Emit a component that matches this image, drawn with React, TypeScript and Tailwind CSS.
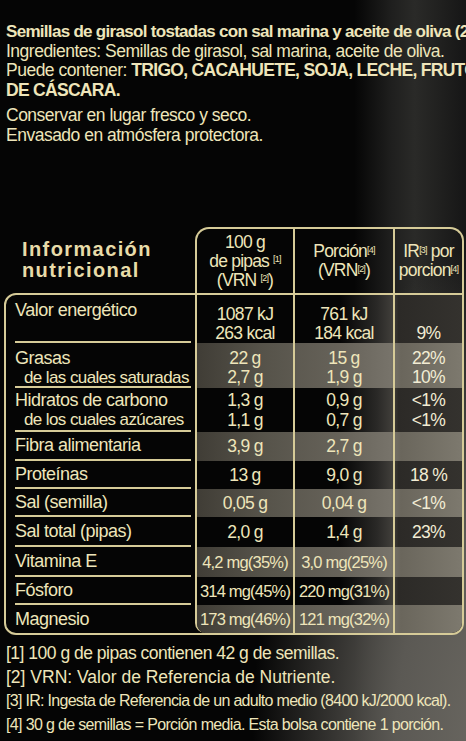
import React from "react";

type Row = {
  labels: { text: string; sub?: boolean }[];
  c1: string[];
  c2: string[];
  c3: string[];
  h: string;
  box: string;
  shade: boolean;
  mg?: boolean;
};

const rows: Row[] = [
  {
    labels: [{ text: "Valor energético" }],
    c1: ["1087 kJ", "263 kcal"],
    c2: ["761 kJ", "184 kcal"],
    c3: ["", "9%"],
    h: "h-[48px]",
    box: "pt-[10px] leading-[19px]",
    shade: false,
  },
  {
    labels: [{ text: "Grasas" }, { text: "de las cuales saturadas", sub: true }],
    c1: ["22 g", "2,7 g"],
    c2: ["15 g", "1,9 g"],
    c3: ["22%", "10%"],
    h: "h-[45px]",
    box: "pt-[6px] leading-[19px]",
    shade: true,
  },
  {
    labels: [{ text: "Hidratos de carbono" }, { text: "de los cuales azúcares", sub: true }],
    c1: ["1,3 g", "1,1 g"],
    c2: ["0,9 g", "0,7 g"],
    c3: ["<1%", "<1%"],
    h: "h-[44px]",
    box: "pt-[2px] leading-[20px]",
    shade: false,
  },
  { labels: [{ text: "Fibra alimentaria" }], c1: ["3,9 g"], c2: ["2,7 g"], c3: [""], h: "h-[29px]", box: "", shade: true },
  { labels: [{ text: "Proteínas" }], c1: ["13 g"], c2: ["9,0 g"], c3: ["18 %"], h: "h-[28px]", box: "", shade: false },
  { labels: [{ text: "Sal (semilla)" }], c1: ["0,05 g"], c2: ["0,04 g"], c3: ["<1%"], h: "h-[28px]", box: "", shade: true },
  { labels: [{ text: "Sal total (pipas)" }], c1: ["2,0 g"], c2: ["1,4 g"], c3: ["23%"], h: "h-[30px]", box: "", shade: false },
  { labels: [{ text: "Vitamina E" }], c1: ["4,2 mg(35%)"], c2: ["3,0 mg(25%)"], c3: [""], h: "h-[30px]", box: "", shade: true, mg: true },
  { labels: [{ text: "Fósforo" }], c1: ["314 mg(45%)"], c2: ["220 mg(31%)"], c3: [""], h: "h-[28px]", box: "", shade: false, mg: true },
  { labels: [{ text: "Magnesio" }], c1: ["173 mg(46%)"], c2: ["121 mg(32%)"], c3: [""], h: "h-[28px]", box: "", shade: true, mg: true },
];

const darkBg =
  "bg-[linear-gradient(90deg,#050505_0%,#050505_54%,#2a2927_68%,#413f3b_74%,#2c2a27_76%,#34322e_100%)]";
const lightBg =
  "bg-[linear-gradient(90deg,#403d36_0%,#56534a_25%,#67635a_55%,#77736a_73%,#6a665c_77%,#7d796e_100%)]";

function Cell({ lines, box, cls, mg }: { lines: string[]; box: string; cls: string; mg?: boolean }) {
  const multi = lines.length > 1;
  return (
    <div
      className={`${cls} flex flex-col items-center ${multi ? box : "justify-center"} ${
        mg ? "text-[16.5px] tracking-[-0.8px]" : "text-[17.5px] tracking-[-0.7px]"
      }`}
    >
      {lines.map((l, i) => (
        <span key={i} className="block whitespace-nowrap min-h-[19px]">
          {l}
        </span>
      ))}
    </div>
  );
}

function NutritionTable() {
  return (
    <div className="mt-[82px] ml-[4px] w-[460px]">
      {/* header */}
      <div className="flex">
        <div className="w-[191px] pl-[18px] pt-[12px] font-bold text-[20px] leading-[21px] tracking-[1.4px] text-[#e8dca9]">
          <p>Información</p>
          <p>nutricional</p>
        </div>
        <div className="flex-1 h-[66px] flex border-2 border-b-0 border-[#d6cb98] rounded-t-[14px] text-[17.5px] leading-[19px] tracking-[-0.8px] text-center">
          <div className="w-[98px] border-r-2 border-[#d6cb98] flex flex-col items-center justify-center">
            <span>100 g</span>
            <span>
              de pipas <sup className="text-[9px]">[1]</sup>
            </span>
            <span>
              (VRN <sup className="text-[9px]">[2]</sup>)
            </span>
          </div>
          <div className="w-[100px] border-r-2 border-[#d6cb98] flex flex-col items-center justify-center">
            <span>
              Porción<sup className="text-[9px]">[4]</sup>
            </span>
            <span>
              (VRN<sup className="text-[9px]">[2]</sup>)
            </span>
          </div>
          <div className="flex-1 flex flex-col items-center justify-center">
            <span>
              IR<sup className="text-[9px]">[3]</sup> por
            </span>
            <span>
              porcion<sup className="text-[9px]">[4]</sup>
            </span>
          </div>
        </div>
      </div>

      {/* body */}
      <div className="flex border-2 border-[#d6cb98] rounded-tl-[12px] rounded-b-[12px] overflow-hidden bg-[#050505]">
        <div className="w-[189px] flex flex-col text-[18px] tracking-[-0.5px]">
          {rows.map((r, i) => (
            <div
              key={i}
              className={`${r.h} ml-[9px] mr-[4px] ${
                i < rows.length - 1 ? "border-b-2 border-[#d6cb98]" : ""
              } flex flex-col ${r.labels.length > 1 ? r.box : i === 0 ? "pt-[6px] leading-[19px]" : "justify-center"}`}
            >
              {r.labels.map((l, j) => (
                <span
                  key={j}
                  className={`block whitespace-nowrap ${l.sub ? "pl-[9px] text-[17px] tracking-[-0.6px]" : ""}`}
                >
                  {l.text}
                </span>
              ))}
            </div>
          ))}
        </div>
        <div className="flex-1 border-l-2 border-[#d6cb98] rounded-bl-[10px] overflow-hidden flex flex-col">
          {rows.map((r, i) => (
            <div key={i} className={`${r.h} flex ${r.shade ? lightBg : darkBg}`}>
              <Cell lines={r.c1} box={r.box} mg={r.mg} cls="w-[98px] border-r-2 border-[#d6cb98]" />
              <Cell lines={r.c2} box={r.box} mg={r.mg} cls="w-[100px] border-r-2 border-[#d6cb98]" />
              <Cell lines={r.c3} box={r.box} cls="flex-1 text-[#f2ecd4]" />
            </div>
          ))}
        </div>
      </div>
    </div>
  );
}

export default function App() {
  return (
    <div className="relative w-[466px] h-[741px] overflow-hidden bg-[radial-gradient(ellipse_260px_500px_at_110%_100%,#6e6b64_0%,#5b5954_45%,transparent_100%),linear-gradient(90deg,#050505_0%,#050505_76%,#1f1f1e_84%,#2a2a28_89%,#161616_100%)] font-['Liberation_Sans',Arial,sans-serif] text-[#eee5ba]">
      <div className="pt-[22px] pl-[6px] text-[17.5px] leading-[19.5px] tracking-[-0.5px]">
        <p className="whitespace-nowrap font-bold text-[17px] tracking-[-0.7px]">
          Semillas de girasol tostadas con sal marina y aceite de oliva (2
        </p>
        <p className="whitespace-nowrap">Ingredientes: Semillas de girasol, sal marina, aceite de oliva.</p>
        <p className="whitespace-nowrap">
          Puede contener:{" "}
          <span className="font-bold tracking-[-0.7px]">TRIGO, CACAHUETE, SOJA, LECHE, FRUTOS</span>
        </p>
        <p className="font-bold tracking-[-0.7px]">DE CÁSCARA.</p>
        <p className="mt-[6px]">Conservar en lugar fresco y seco.</p>
        <p>Envasado en atmósfera protectora.</p>
      </div>

      <NutritionTable />

      <div className="mt-[7px] pl-[6px] text-[17.5px] leading-[23.5px] tracking-[-0.5px]">
        <p className="whitespace-nowrap">[1] 100 g de pipas contienen 42 g de semillas.</p>
        <p className="whitespace-nowrap tracking-[0px]">[2] VRN: Valor de Referencia de Nutriente.</p>
        <p className="whitespace-nowrap text-[16px] tracking-[-0.7px]">
          [3] IR: Ingesta de Referencia de un adulto medio (8400 kJ/2000 kcal).
        </p>
        <p className="whitespace-nowrap text-[16px] tracking-[-0.65px]">
          [4] 30 g de semillas = Porción media. Esta bolsa contiene 1 porción.
        </p>
      </div>
    </div>
  );
}
